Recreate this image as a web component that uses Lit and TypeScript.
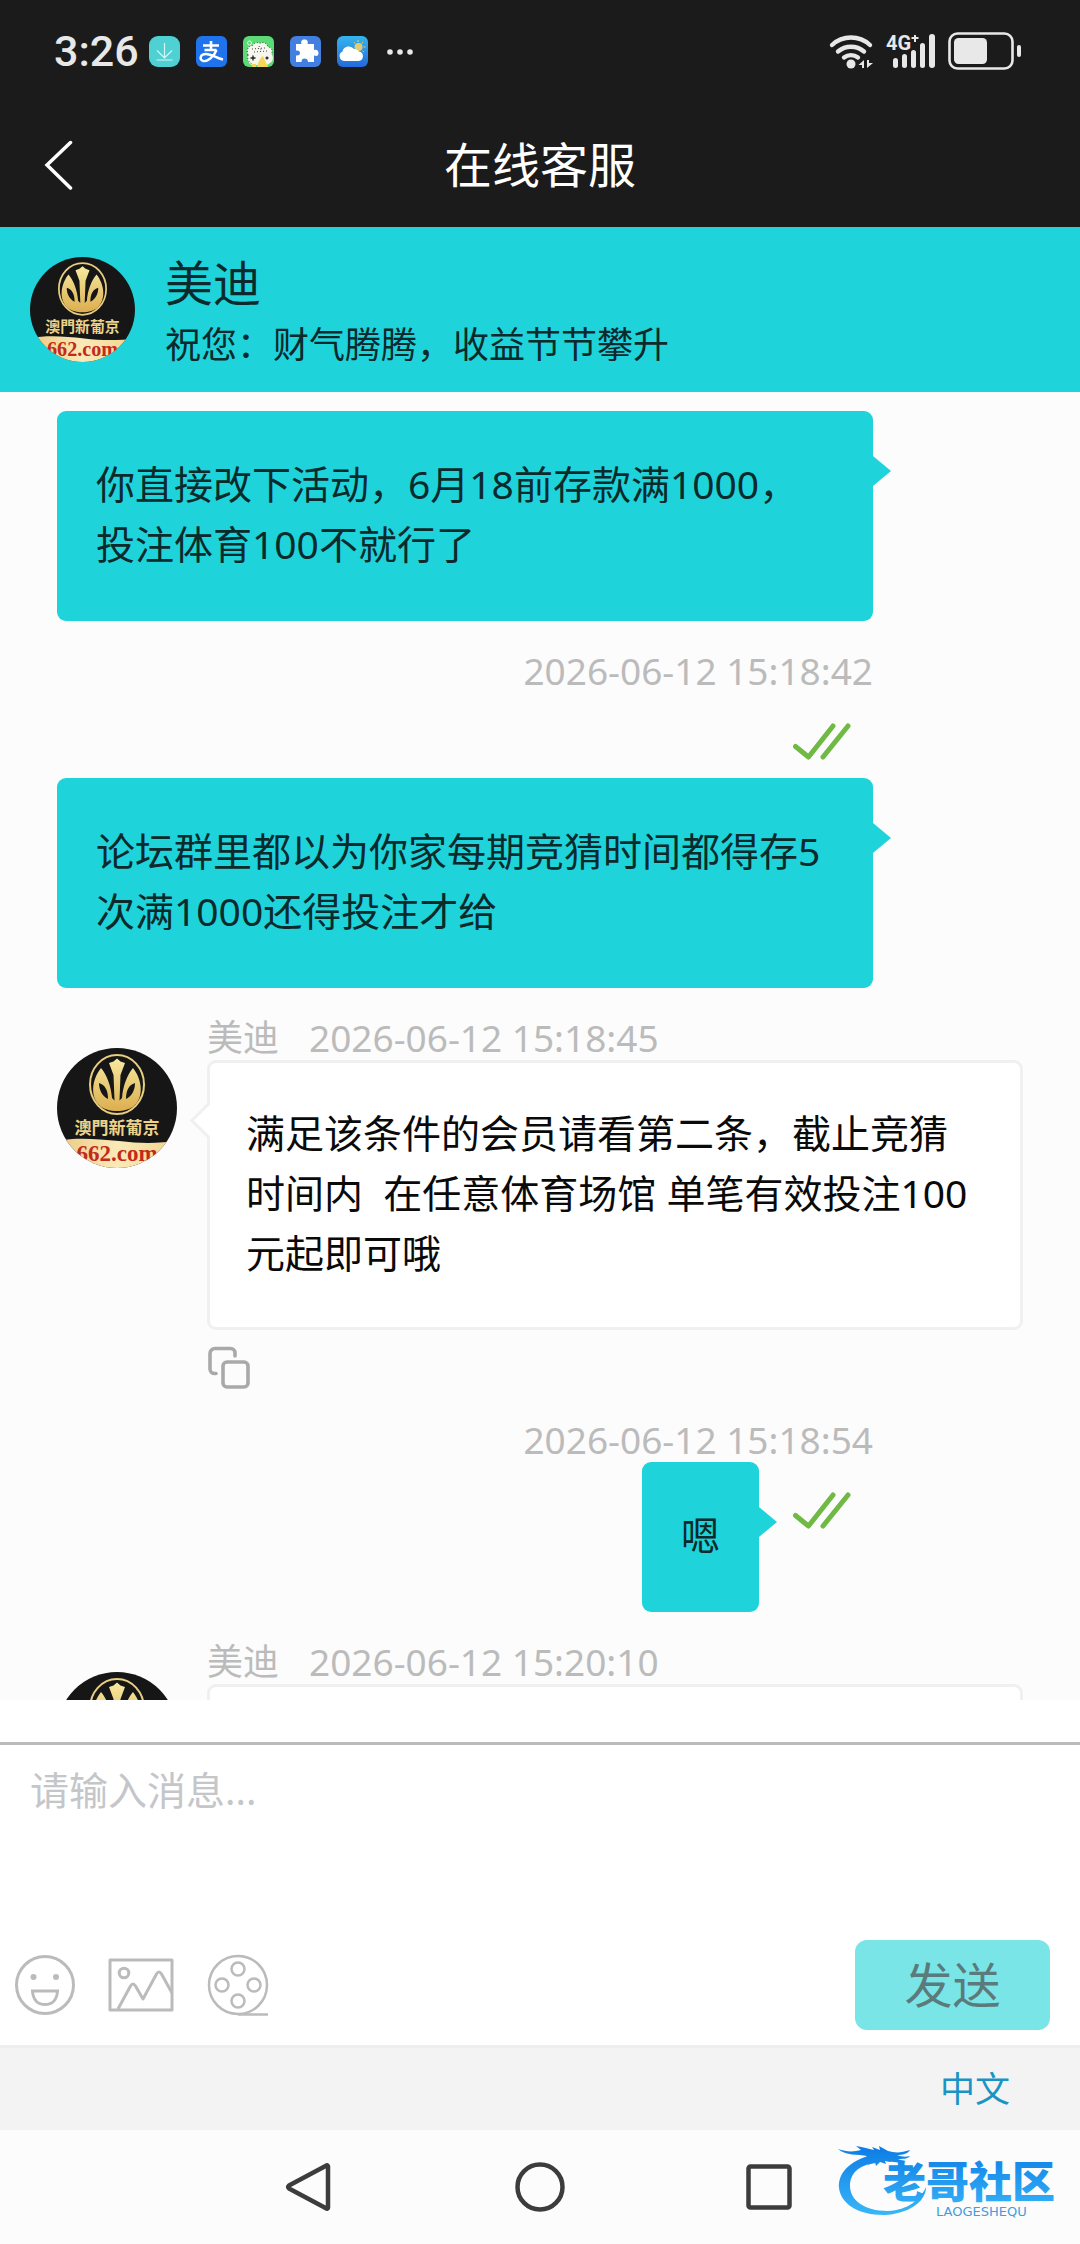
import { LitElement, html, svg, css, nothing } from "lit";
import { customElement, property } from "lit/decorators.js";

interface Message {
  from: "me" | "agent";
  time?: string;
  read?: boolean;
  copy?: boolean;
  text: string;
}

const AGENT = "美迪";

const MESSAGES: Message[] = [
  { from: "me", text: "你直接改下活动，6月18前存款满1000，投注体育100不就行了" },
  {
    from: "me",
    time: "2026-06-12 15:18:42",
    read: true,
    text: "论坛群里都以为你家每期竞猜时间都得存5次满1000还得投注才给",
  },
  {
    from: "agent",
    time: "2026-06-12 15:18:45",
    copy: true,
    text: "满足该条件的会员请看第二条，截止竞猜时间内  在任意体育场馆 单笔有效投注100元起即可哦",
  },
  { from: "me", time: "2026-06-12 15:18:54", read: true, text: "嗯" },
  { from: "agent", time: "2026-06-12 15:20:10", text: "" },
];

const FONT = css`"Noto Sans", "Noto Sans CJK SC", sans-serif`;

@customElement("agent-avatar")
export class AgentAvatar extends LitElement {
  static styles = css`
    :host {
      display: block;
      border-radius: 50%;
      overflow: hidden;
    }
    svg {
      display: block;
      width: 100%;
      height: 100%;
    }
    .brand {
      font: 700 17px "Noto Sans CJK TC", sans-serif;
    }
    .site {
      font: 700 23px "Liberation Serif", serif;
    }
  `;

  render() {
    return html`<svg viewBox="0 0 120 120" role="img" aria-label="澳門新葡京">
      <defs>
        <linearGradient id="gold" x1="0" y1="0" x2="0" y2="1">
          <stop offset="0" stop-color="#f6e9a0" />
          <stop offset="1" stop-color="#dcae4e" />
        </linearGradient>
        <linearGradient id="band" x1="0" y1="0" x2="1" y2="0">
          <stop offset="0" stop-color="#ecc882" />
          <stop offset="0.5" stop-color="#faeab8" />
          <stop offset="1" stop-color="#f0d38c" />
        </linearGradient>
      </defs>
      <rect width="120" height="120" fill="#161616" />
      <ellipse cx="60" cy="36.5" rx="27" ry="29.5" fill="none" stroke="#e6cd80" stroke-width="2" />
      <path
        d="M44 20C35 31 33 48 42 57C50 65 70 65 78 57C87 48 85 31 76 20C70 27 66 38 65 50L62.5 52.5L63.5 27L68 15L63.500 13.500L60 10.500L56.500 13.500L52 15L56.500 27L57.500 52.500L55 50C54 38 50 27 44 20Z"
        fill="url(#gold)"
      />
      <path d="M42 35C48 37 51 42 51 51C45 48 42 42 42 35ZM78 35C72 37 69 42 69 51C75 48 78 42 78 35Z" fill="#161616" />
      <text class="brand" x="60" y="86" text-anchor="middle" fill="#ecd28a">澳門新葡京</text>
      <path d="M0 93C20 89 40 91 62 93C85 96 104 95 120 93V120H0Z" fill="url(#band)" />
      <text class="site" x="60" y="113" text-anchor="middle" fill="#c22a1c">662.com</text>
    </svg>`;
  }
}

@customElement("status-bar")
export class StatusBar extends LitElement {
  static styles = css`
    :host {
      display: flex;
      align-items: center;
      justify-content: space-between;
      height: 102px;
      padding: 0 58px 0 54px;
      color: #e8e8e8;
    }
    .group {
      display: flex;
      align-items: center;
      gap: 16px;
    }
    .signals {
      gap: 12px;
    }
    .time {
      font: 500 43px/50px Roboto, sans-serif;
      margin-right: -6px;
    }
    svg {
      display: block;
      overflow: visible;
    }
    .net {
      font: 700 20px Roboto, sans-serif;
    }
  `;

  render() {
    return html`
      <div class="group">
        <span class="time">3:26</span>
        <svg width="31" height="31" viewBox="0 0 31 31">
          <rect width="31" height="31" rx="9" fill="#4fd0d3" />
          <path d="M15.500 7V22M8 14.500L15.500 22L23 14.500M7.500 24H23.500" fill="none" stroke="#d4f6f5" stroke-width="1.200" />
        </svg>
        <svg width="31" height="31" viewBox="0 0 31 31">
          <rect width="31" height="31" rx="6" fill="#1f74ee" />
          <path d="M7 9.500H23M15 5V14M8.500 14H20.500" fill="none" stroke="#fff" stroke-width="2.600" />
          <path
            d="M20.500 14C18 21 11 26 7 25C3 23.500 4 18 10 18C16 18 20 22 27 23.500"
            fill="none"
            stroke="#fff"
            stroke-width="2.400"
          />
        </svg>
        <svg width="31" height="31" viewBox="0 0 31 31">
          <rect width="31" height="31" rx="6" fill="#5adb76" />
          <path
            d="M5 19C3 13 6 9 9 10C11 6 15 6 17 7.500C20 5 24 7 25 11C29 11 30 15 28.500 18C31 21 30 26 27 27L24 29H9C5 28 4 22 5 19Z"
            fill="#f6f6ee"
          />
          <path
            d="M5 19C3 13 6 9 9 10C11 6 15 6 17 7.500C20 5 24 7 25 11C29 11 30 15 28.500 18M9 13L22 12M11 16L24 15M16 10L18 14M5 19C4 24 6 27 10 28"
            fill="none"
            stroke="#444"
            stroke-dasharray="1 2"
          />
          <path d="M14 31C15 26 17 22 20 20L25 31ZM9 31V28H13V31Z" fill="#f6d65a" />
          <path d="M10 19.500V24.500M7.500 22H12.500M24 20.500V23.500M22.500 22H25.500" stroke="#222" stroke-width="1.400" />
          <circle cx="6.500" cy="7" r="2" fill="none" stroke="#e8ffe8" />
        </svg>
        <svg width="31" height="31" viewBox="0 0 31 31">
          <rect width="31" height="31" rx="6" fill="#437fe0" />
          <path
            d="M6 8H11.500C10.500 5 12 3.500 14.500 3.500S18.500 5 17.500 8H24V14C27 13 28.500 14.500 28.500 17S27 20.500 24 19.500V26H18C18 23.500 16.500 22.500 14.500 22.500S11.500 23.500 11.500 26H6V19.500C9 20 10 18.500 10 17S9 14 6 14.500Z"
            fill="#fff"
          />
        </svg>
        <svg width="31" height="31" viewBox="0 0 31 31">
          <defs>
            <linearGradient id="sky" x1="0" y1="0" x2="0" y2="1">
              <stop offset="0" stop-color="#35b6ee" />
              <stop offset="1" stop-color="#2468dc" />
            </linearGradient>
          </defs>
          <rect width="31" height="31" rx="6" fill="url(#sky)" />
          <circle cx="21.500" cy="11" r="4" fill="#e0cf72" />
          <path d="M17 6L18 7.500M21 4V6M26 6L24.500 7.500M28.500 11H26.500M27 16L25.500 15" stroke="#e0cf72" />
          <path d="M7 25A5 5 0 0 1 5.500 15.500A6.500 6.500 0 0 1 17 13A5.500 5.500 0 0 1 22 15.500A4.800 4.800 0 0 1 21.500 25Z" fill="#fff" />
        </svg>
        <svg width="31" height="31" viewBox="0 0 31 31" fill="#e8e8e8">
          <circle cx="6" cy="16" r="2.800" />
          <circle cx="16" cy="16" r="2.800" />
          <circle cx="26" cy="16" r="2.800" />
        </svg>
      </div>
      <div class="group signals">
        <svg width="45" height="36" viewBox="0 0 45 36">
          <g fill="none" stroke="#e8e8e8" stroke-width="4.400" stroke-linecap="round">
            <path d="M3 12A28 28 0 0 1 41 12" />
            <path d="M9 18.500A20 20 0 0 1 35 18.500" />
            <path d="M15 24.500A11.500 11.500 0 0 1 29 24.500" />
          </g>
          <circle cx="22" cy="31" r="4.500" fill="#e8e8e8" />
          <path d="M35 27V35H33V32H29.500ZM38 27V35L44 30H40V27Z" fill="#e8e8e8" />
        </svg>
        <svg width="50" height="36" viewBox="0 0 50 36" fill="#e8e8e8">
          <text class="net" x="0" y="17">4G</text>
          <path d="M28 2H30V4H32.500V6H30V9H28V6H25.500V4H28Z" />
          <rect x="7" y="25" width="5" height="10" rx="2.500" />
          <rect x="16" y="21" width="5" height="14" rx="2.500" />
          <rect x="25" y="17" width="5" height="18" rx="2.500" />
          <rect x="34" y="10" width="5" height="25" rx="2.500" />
          <rect x="43" y="1" width="6" height="34" rx="3" />
        </svg>
        <svg width="74" height="38" viewBox="0 0 74 38">
          <rect x="1.500" y="1.500" width="63" height="35" rx="8" fill="none" stroke="#e8e8e8" stroke-width="2.600" />
          <rect x="6" y="6" width="33" height="26" rx="4.500" fill="#e8e8e8" />
          <rect x="69" y="13" width="4" height="12" rx="2" fill="#e8e8e8" />
        </svg>
      </div>
    `;
  }
}

@customElement("chat-message")
export class ChatMessage extends LitElement {
  @property({ attribute: false }) message!: Message;

  static styles = css`
    :host {
      display: block;
      font-family: ${FONT};
    }
    .message {
      display: grid;
    }
    .timed {
      padding-top: 28px;
    }
    .me {
      padding-right: 150px;
    }
    .agent {
      grid-template-columns: 120px 1fr;
      column-gap: 30px;
    }
    .avatar {
      width: 120px;
      height: 120px;
      margin-top: 32px;
    }
    .meta {
      display: flex;
      gap: 30px;
      font-size: 36px;
      line-height: 44px;
      color: #bbb;
    }
    .me .meta {
      justify-content: flex-end;
    }
    .stamp {
      font-size: 37px;
    }
    .row {
      display: flex;
      flex-flow: row-reverse wrap;
    }
    .read {
      box-sizing: border-box;
      width: 114px;
      height: 85px;
      padding: 30px 0 0 34px;
    }
    .bubble {
      position: relative;
      box-sizing: border-box;
      max-width: 100%;
      padding: 43px 39px 47px;
      border-radius: 9px;
      background: #1fd3da;
      color: #0b2a2c;
      font-size: 39px;
      line-height: 60px;
      white-space: pre-wrap;
    }
    .me .bubble::after {
      content: "";
      position: absolute;
      left: 100%;
      top: 45px;
      border: 15px solid transparent;
      border-left: 18px solid #1fd3da;
      border-right: 0;
    }
    .agent .bubble {
      min-height: 150px;
      padding: 40px 36px 44px;
      border: 3px solid #f0f0f0;
      background: #fff;
      color: #0a0a0a;
    }
    .agent .bubble::before {
      content: "";
      position: absolute;
      left: -15px;
      top: 45px;
      width: 22px;
      height: 22px;
      border: solid #f0f0f0;
      border-width: 0 0 3px 3px;
      background: #fff;
      transform: rotate(45deg);
    }
    .copy {
      display: flex;
      align-items: flex-end;
      height: 60px;
      padding: 0;
      border: 0;
      background: none;
    }
    svg {
      display: block;
    }
  `;

  render() {
    const m = this.message;
    return m.from === "me" ? this.renderMine(m) : this.renderAgent(m);
  }

  private renderMine(m: Message) {
    return html`<article class="message me ${m.time ? "timed" : ""}">
      ${m.time ? html`<div class="meta"><time class="stamp">${m.time}</time></div>` : nothing}
      <div class="row">
        ${m.read
          ? html`<div class="read">
              <svg width="58" height="37" viewBox="0 0 58 37" role="img" aria-label="已读">
                <path
                  d="M2.500 23.500L15.500 34L40 3M30 34L55 3"
                  fill="none"
                  stroke="#6fb944"
                  stroke-width="5"
                  stroke-linecap="round"
                  stroke-linejoin="round"
                />
              </svg>
            </div>`
          : nothing}
        <div class="bubble">${m.text}</div>
      </div>
    </article>`;
  }

  private renderAgent(m: Message) {
    return html`<article class="message agent timed">
      <agent-avatar class="avatar"></agent-avatar>
      <div>
        <div class="meta"><span>${AGENT}</span><time class="stamp">${m.time}</time></div>
        <div class="bubble">${m.text}</div>
        ${m.copy
          ? html`<button class="copy" aria-label="复制">
              <svg width="44" height="44" viewBox="0 0 44 44" fill="none" stroke="#a9a9a9" stroke-width="3.600">
                <path d="M28 10V7A4.500 4.500 0 0 0 23.500 2.500H8A5 5 0 0 0 3 7.500V23A4.500 4.500 0 0 0 7.500 27.500H9" stroke-linecap="round" />
                <rect x="16" y="16" width="25" height="25" rx="4" />
              </svg>
            </button>`
          : nothing}
      </div>
    </article>`;
  }
}

@customElement("brand-mark")
export class BrandMark extends LitElement {
  static styles = css`
    :host {
      display: block;
    }
    svg {
      display: block;
      overflow: visible;
    }
    .name {
      font: 900 43px "Noto Sans CJK SC", sans-serif;
    }
    .latin {
      font: 400 13px "DejaVu Sans", sans-serif;
    }
  `;

  render() {
    return html`<svg width="224" height="74" viewBox="0 0 224 74" role="img" aria-label="老哥社区">
      <defs>
        <linearGradient id="blue" gradientUnits="userSpaceOnUse" x1="0" y1="6" x2="0" y2="70">
          <stop offset="0" stop-color="#0f7fe6" />
          <stop offset="1" stop-color="#38b6f8" />
        </linearGradient>
      </defs>
      <g fill="url(#blue)">
        <path d="M34 11C10 17 0 30 1 44C3 60 20 71 46 71C70 70 88 58 88 43C82 56 70 66 50 67C26 67 12 56 12 42C12 30 20 21 38 19Z" />
        <path
          d="M0 5C8 8 16 8 23 6L18 2C26 3 30 5 36 6L34 3L42 6L41 2L50 7C57 9 63 9 72 6C70 10 64 11 59 11C64 13 68 13 72 12C70 15 64 15 60 15L68 18C61 20 56 17 52 18L47 17L48 20L42 18L38 22L37 18L30 21L32 17L26 15L29 12C20 10 8 12 0 5Z"
        />
        <text class="name" x="45" y="54">老哥社区</text>
      </g>
      <text class="latin" x="98" y="72" fill="#3f9ee0">LAOGESHEQU</text>
    </svg>`;
  }
}

const navIcon = {
  back: svg`<path d="M43 4.500V45.500Q43 47 41.500 46.500L4 26.500Q2.500 25 4 23.500L41.500 3.500Q43 3 43 4.500Z" />`,
  home: svg`<circle cx="25" cy="25" r="22.500" />`,
  recent: svg`<rect x="3.500" y="4.500" width="41" height="41" rx="2" />`,
};

@customElement("app-root")
export class AppRoot extends LitElement {
  static styles = css`
    :host {
      display: flex;
      flex-direction: column;
      height: 100vh;
      background: #fff;
      font-family: ${FONT};
    }
    button {
      padding: 0;
      border: 0;
      background: none;
      font-family: inherit;
    }
    svg {
      display: block;
    }
    .top {
      background: #1b1b1b;
      color: #fff;
    }
    .titlebar {
      display: grid;
      grid-template-columns: 1fr auto 1fr;
      align-items: center;
      height: 125px;
      padding: 0 42px;
    }
    h1,
    h2,
    p {
      margin: 0;
      font-weight: 400;
    }
    h1,
    h2 {
      font-size: 48px;
      line-height: 60px;
    }
    .back {
      justify-self: start;
    }
    .agent {
      display: flex;
      align-items: center;
      gap: 30px;
      padding: 24px 30px;
      height: 117px;
      background: #1fd3da;
      color: #0b2a2c;
    }
    .avatar {
      flex: none;
      width: 105px;
      height: 105px;
    }
    .intro {
      padding-top: 10px;
    }
    .slogan {
      font-size: 36px;
      line-height: 64px;
    }
    .chat {
      flex: 1;
      min-height: 0;
      overflow-y: auto;
      scrollbar-width: none;
      padding: 19px 57px 0;
      background: #fcfcfc;
    }
    .composer {
      margin-top: 42px;
      border-top: 3px solid #bbb;
      padding-bottom: 15px;
    }
    textarea {
      display: block;
      box-sizing: border-box;
      width: 100%;
      height: 195px;
      padding: 15px 30px;
      border: 0;
      outline: 0;
      resize: none;
      background: none;
      font-family: inherit;
      font-size: 39px;
      line-height: 60px;
      color: #0a0a0a;
    }
    textarea::placeholder {
      color: #c4c6c9;
      opacity: 1;
    }
    .tools {
      display: flex;
      align-items: center;
      gap: 33px;
      padding: 0 30px 0 15px;
    }
    .send {
      margin-left: auto;
      width: 195px;
      height: 90px;
      border-radius: 12px;
      background: #79e5e6;
      color: #5b7a7b;
      font-size: 48px;
      line-height: 60px;
    }
    .lang {
      display: flex;
      justify-content: flex-end;
      border-top: 3px solid #eee;
      padding: 11px 70px;
      background: #f3f3f3;
    }
    .lang a {
      color: #1b93c4;
      font-size: 35px;
      line-height: 60px;
      text-decoration: none;
    }
    .nav {
      position: relative;
      display: flex;
      align-items: center;
      justify-content: center;
      gap: 180px;
      height: 114px;
      background: #fcfcfc;
    }
    .mark {
      position: absolute;
      right: 18px;
      bottom: 26px;
    }
  `;

  render() {
    return html`
      <header class="top">
        <status-bar></status-bar>
        <div class="titlebar">
          <button class="back" aria-label="返回">
            <svg width="32" height="50" viewBox="0 0 32 50" fill="none" stroke="#fff" stroke-width="3.500" stroke-linecap="round">
              <path d="M28.500 2.500L5 25L28.500 48" />
            </svg>
          </button>
          <h1>在线客服</h1>
        </div>
      </header>
      <section class="agent">
        <agent-avatar class="avatar"></agent-avatar>
        <div class="intro">
          <h2>${AGENT}</h2>
          <p class="slogan">祝您：财气腾腾，收益节节攀升</p>
        </div>
      </section>
      <main class="chat">${MESSAGES.map((m) => html`<chat-message .message=${m}></chat-message>`)}</main>
      <form class="composer" @submit=${(e: Event) => e.preventDefault()}>
        <textarea aria-label="消息" placeholder="请输入消息..."></textarea>
        <div class="tools">
          <button type="button" aria-label="表情">
            <svg width="60" height="62" viewBox="0 0 60 62" fill="none" stroke="#bbb" stroke-width="3">
              <circle cx="30" cy="31" r="28.500" />
              <circle cx="18.500" cy="23" r="3" fill="#bbb" stroke="none" />
              <circle cx="41" cy="23" r="3" fill="#bbb" stroke="none" />
              <path d="M17.500 37H42.500C42 46 37 50.500 30 50.500S18 46 17.500 37Z" />
            </svg>
          </button>
          <button type="button" aria-label="图片">
            <svg width="66" height="54" viewBox="0 0 66 54" fill="none" stroke="#bbb" stroke-width="3" stroke-linejoin="round">
              <rect x="2" y="2" width="62" height="50" />
              <circle cx="16" cy="15" r="4.800" />
              <path d="M10 51L22.500 28Q25 24 27.500 28L35 41L48.500 16Q51 12 53.500 16L64 35" />
            </svg>
          </button>
          <button type="button" aria-label="视频">
            <svg width="62" height="62" viewBox="0 0 62 62" fill="none" stroke="#bbb" stroke-width="2.500">
              <circle cx="31" cy="31" r="29" />
              <circle cx="31" cy="15" r="6.500" />
              <circle cx="15" cy="31" r="6.500" />
              <circle cx="47" cy="31" r="6.500" />
              <circle cx="31" cy="47" r="6.500" />
              <path d="M31 60.500H61" />
            </svg>
          </button>
          <button class="send">发送</button>
        </div>
      </form>
      <div class="lang"><a href="#lang">中文</a></div>
      <nav class="nav">
        ${Object.entries(navIcon).map(
          ([name, shape]) => html`<button aria-label=${name}>
            <svg width="50" height="50" viewBox="0 0 50 50" fill="none" stroke="#3c3c3c" stroke-width="4.500" stroke-linejoin="round">
              ${shape}
            </svg>
          </button>`
        )}
        <brand-mark class="mark"></brand-mark>
      </nav>
    `;
  }
}
